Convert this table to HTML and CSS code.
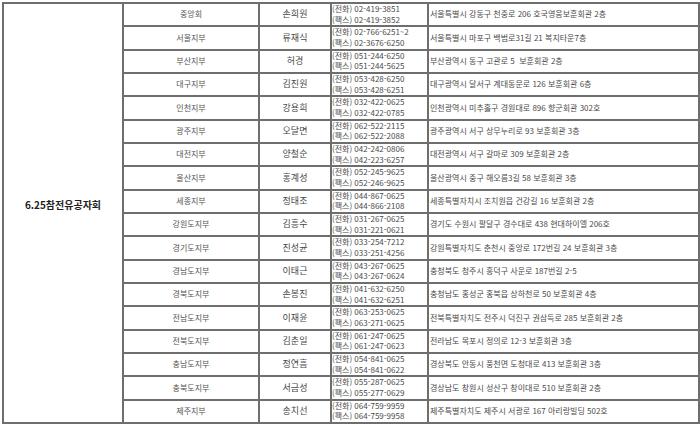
FILE: index.html
```html
<!DOCTYPE html>
<html lang="ko">
<head>
<meta charset="utf-8">
<link rel="stylesheet" href="styles.css">
</head>
<body>
<table class="tbl">
<colgroup>
<col class="c1"><col class="c2"><col class="c3"><col class="c4"><col class="c5">
</colgroup>
<tbody>
<tr><td class="org" rowspan="18">6.25참전유공자회</td><td class="br">중앙회</td><td class="nm">손희원</td><td class="ph">(전화) 02-419-3851<br>(팩스) 02-419-3852</td><td class="ad">서울특별시 강동구 천중로 206 호국영웅보훈회관 2층</td></tr>
<tr><td class="br">서울지부</td><td class="nm">류재식</td><td class="ph">(전화) 02-766-6251~2<br>(팩스) 02-3676-6250</td><td class="ad">서울특별시 마포구 백범로31길 21 복지타운7층</td></tr>
<tr><td class="br">부산지부</td><td class="nm">허경</td><td class="ph">(전화) 051-244-6250<br>(팩스) 051-244-5625</td><td class="ad">부산광역시 동구 고관로 5&nbsp; 보훈회관 2층</td></tr>
<tr><td class="br">대구지부</td><td class="nm">김진원</td><td class="ph">(전화) 053-428-6250<br>(팩스) 053-428-6251</td><td class="ad">대구광역시 달서구 계대동문로 126 보훈회관 6층</td></tr>
<tr><td class="br">인천지부</td><td class="nm">강용희</td><td class="ph">(전화) 032-422-0625<br>(팩스) 032-422-0785</td><td class="ad">인천광역시 미추홀구 경원대로 896 향군회관 302호</td></tr>
<tr><td class="br">광주지부</td><td class="nm">오달면</td><td class="ph">(전화) 062-522-2115<br>(팩스) 062-522-2088</td><td class="ad">광주광역시 서구 상무누리로 93 보훈회관 3층</td></tr>
<tr><td class="br">대전지부</td><td class="nm">양철순</td><td class="ph">(전화) 042-242-0806<br>(팩스) 042-223-6257</td><td class="ad">대전광역시 서구 갈마로 309 보훈회관 2층</td></tr>
<tr><td class="br">울산지부</td><td class="nm">홍계성</td><td class="ph">(전화) 052-245-9625<br>(팩스) 052-246-9625</td><td class="ad">울산광역시 중구 해오름3길 58 보훈회관 3층</td></tr>
<tr><td class="br">세종지부</td><td class="nm">정태조</td><td class="ph">(전화) 044-867-0625<br>(팩스) 044-866-2108</td><td class="ad">세종특별자치시 조치원읍 건강길 16 보훈회관 2층</td></tr>
<tr><td class="br">강원도지부</td><td class="nm">김흥수</td><td class="ph">(전화) 031-267-0625<br>(팩스) 031-221-0621</td><td class="ad">경기도 수원시 팔달구 경수대로 438 현대하이엘 206호</td></tr>
<tr><td class="br">경기도지부</td><td class="nm">진성균</td><td class="ph">(전화) 033-254-7212<br>(팩스) 033-251-4256</td><td class="ad">강원특별자치도 춘천시 중앙로 172번길 24 보훈회관 3층</td></tr>
<tr><td class="br">경남도지부</td><td class="nm">이태근</td><td class="ph">(전화) 043-267-0625<br>(팩스) 043-267-0624</td><td class="ad">충청북도 청주시 흥덕구 사운로 187번길 2-5</td></tr>
<tr><td class="br">경북도지부</td><td class="nm">손봉진</td><td class="ph">(전화) 041-632-6250<br>(팩스) 041-632-6251</td><td class="ad">충청남도 홍성군 홍북읍 상하천로 50 보훈회관 4층</td></tr>
<tr><td class="br">전남도지부</td><td class="nm">이재윤</td><td class="ph">(전화) 063-253-0625<br>(팩스) 063-271-0625</td><td class="ad">전북특별자치도 전주시 덕진구 권삼득로 285 보훈회관 2층</td></tr>
<tr><td class="br">전북도지부</td><td class="nm">김춘일</td><td class="ph">(전화) 061-247-0625<br>(팩스) 061-247-0623</td><td class="ad">전라남도 목포시 정의로 12-3 보훈회관 3층</td></tr>
<tr><td class="br">충남도지부</td><td class="nm">정연흠</td><td class="ph">(전화) 054-841-0625<br>(팩스) 054-841-0622</td><td class="ad">경상북도 안동시 풍천면 도청대로 413 보훈회관 3층</td></tr>
<tr><td class="br">충북도지부</td><td class="nm">서금성</td><td class="ph">(전화) 055-287-0625<br>(팩스) 055-277-0629</td><td class="ad">경상남도 창원시 성산구 창이대로 510 보훈회관 2층</td></tr>
<tr><td class="br">제주지부</td><td class="nm">송치선</td><td class="ph">(전화) 064-759-9959<br>(팩스) 064-759-9958</td><td class="ad">제주특별자치도 제주시 서광로 167 아리랑빌딩 502호</td></tr>
</tbody>
</table>
</body>
</html>
```

FILE: styles.css
```css
html, body {
  margin: 0;
  padding: 0;
  background: #ffffff;
}
body {
  font-family: "Noto Sans CJK KR", "Noto Sans", sans-serif;
  color: #4a4a4a;
  padding: 2px 0 0 2px;
}
.tbl {
  border-collapse: collapse;
  table-layout: fixed;
  width: 696px;
  height: 422px;
}
.c1 { width: 120px; }
.c2 { width: 136px; }
.c3 { width: 72px; }
.c4 { width: 97px; }
.c5 { width: 271px; }
.tbl td {
  border: 2px solid #6e6e6e;
  padding: 0;
  height: 20px;
  font-size: 8px;
  line-height: 10.5px;
  vertical-align: middle;
  white-space: nowrap;
  overflow: hidden;
}
.tbl td.org {
  font-size: 10px;
  line-height: 14px;
  font-weight: bold;
  color: #1e1e1e;
  text-align: center;
  padding-bottom: 16px;
}
.tbl td.br {
  text-align: center;
  color: #555;
}
.tbl td.nm {
  text-align: center;
  font-size: 9px;
  color: #484848;
}
.tbl td.ph {
  text-align: left;
  padding-left: 0;
  color: #4a4a4a;
}
.tbl td.ad {
  text-align: left;
  padding-left: 1px;
  color: #4a4a4a;
}
```
